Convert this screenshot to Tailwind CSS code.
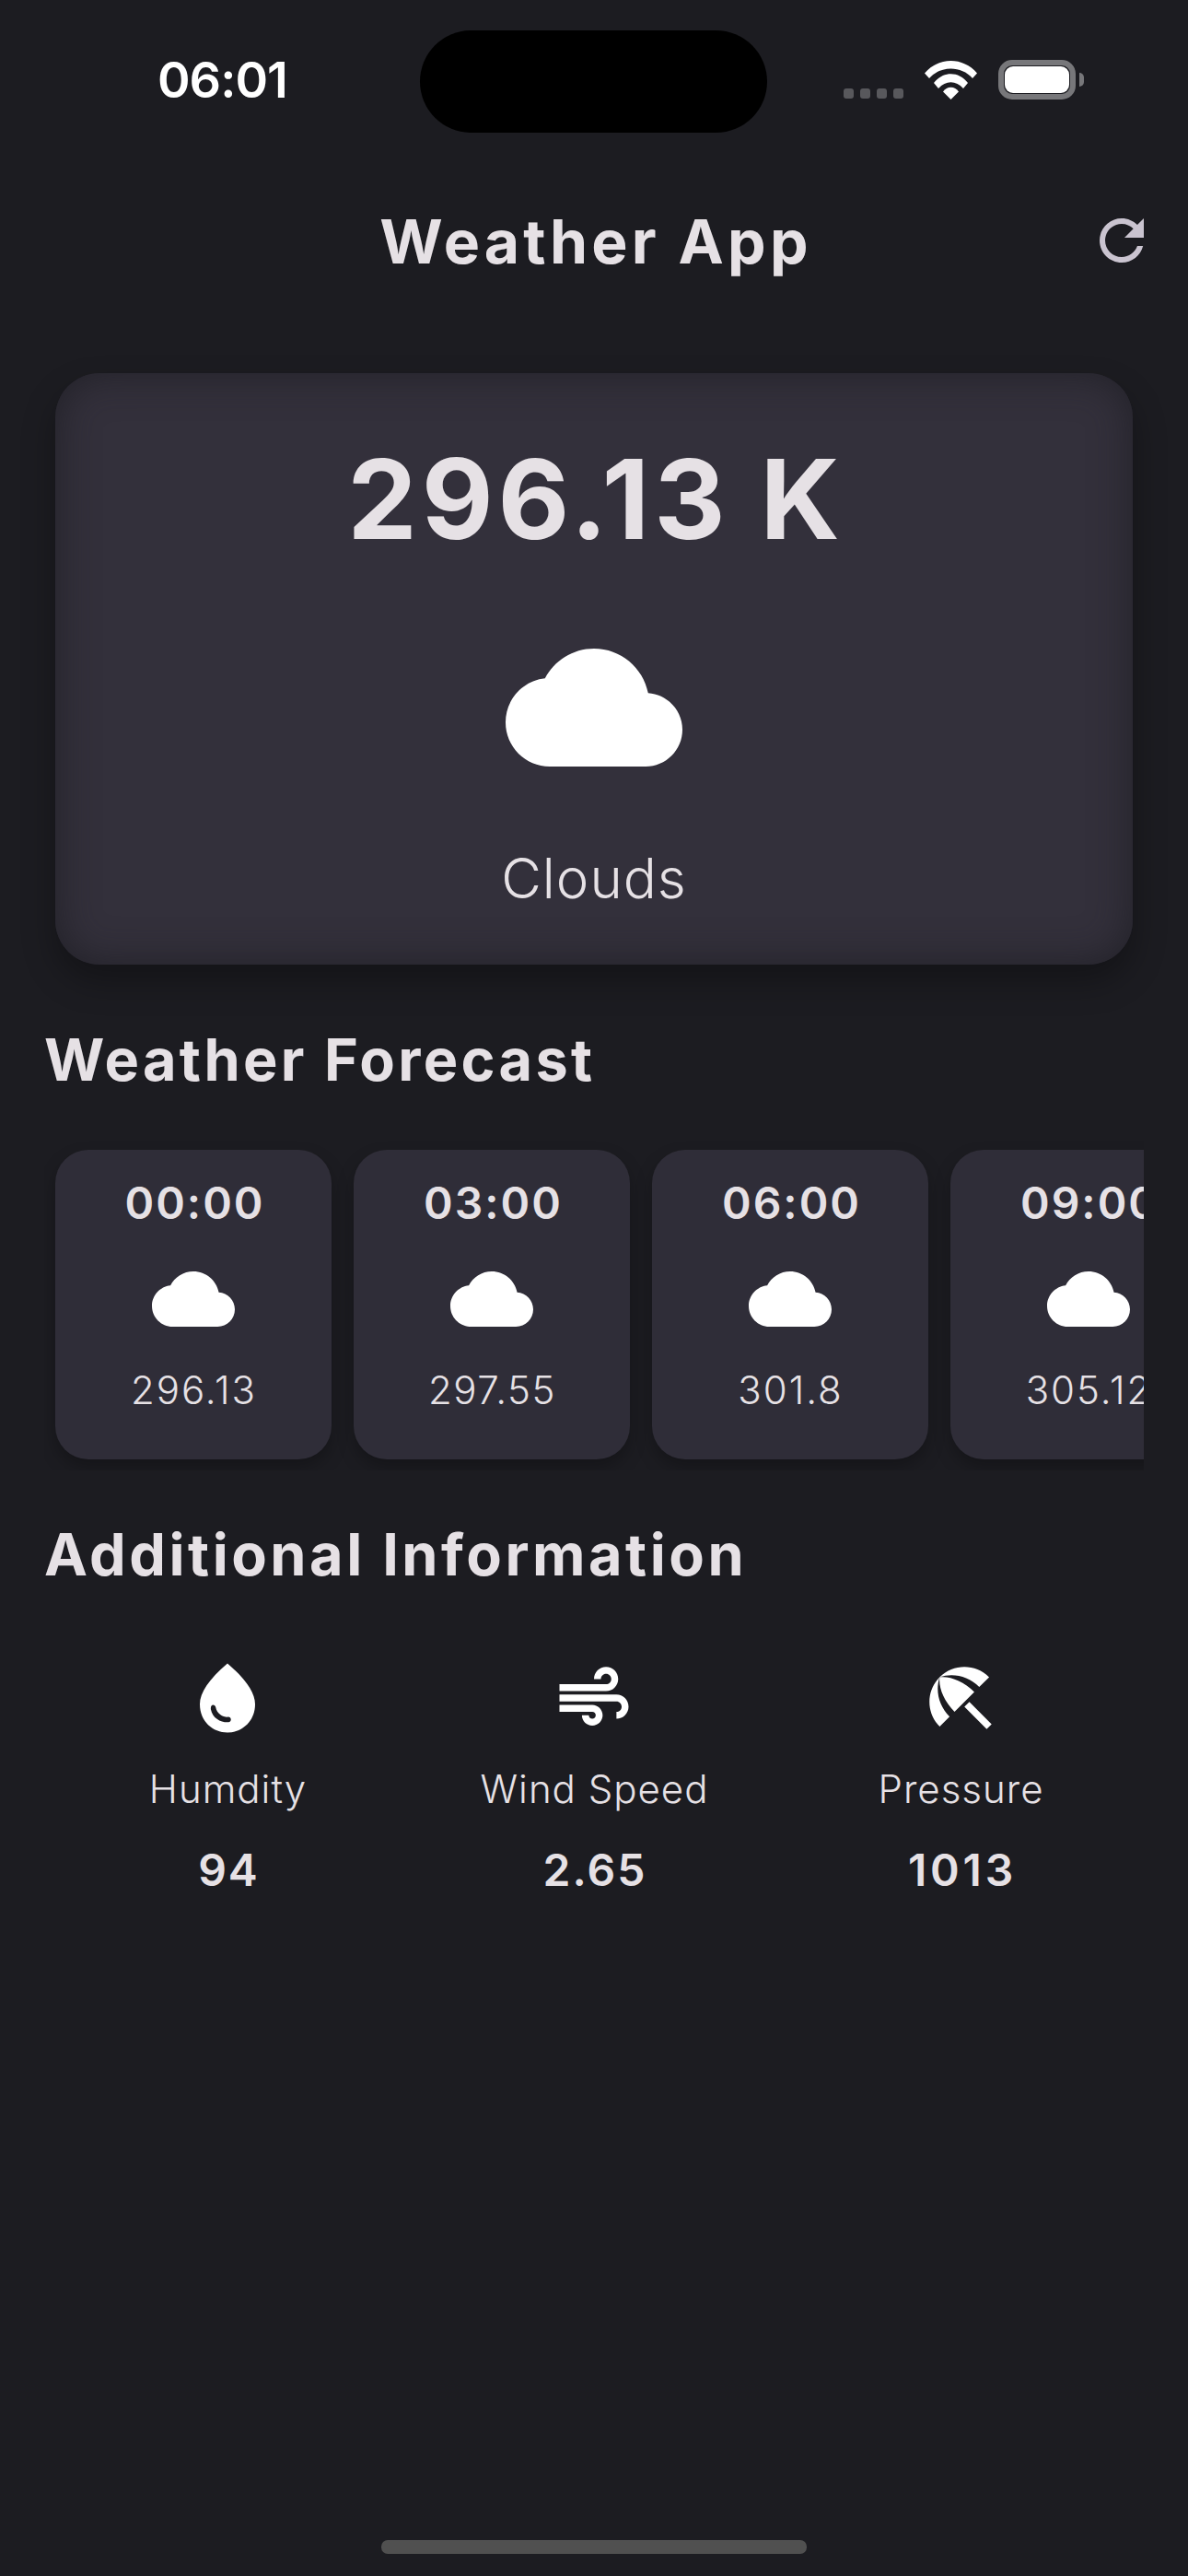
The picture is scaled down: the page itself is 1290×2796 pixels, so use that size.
<!DOCTYPE html>
<html lang="en">

<head>
  <meta charset="UTF-8">
  <meta name="viewport" content="width=device-width, initial-scale=1.0">
  <title>Weather App</title>
  <script src="https://cdn.jsdelivr.net/npm/@tailwindcss/browser@4"></script>
</head>

<body class="bg-[#1c1c21]">
  <div class="relative w-[1290px] h-[2796px] overflow-hidden bg-[#1c1c21] text-[#e6e1e5] font-['Inter',sans-serif]">

    <!-- status bar -->
    <div class="relative flex items-start h-[177px]">
      <span class="ml-[171px] mt-[54px] text-[54px] leading-[66px] font-semibold text-white tracking-[-1px]">06:01</span>
      <div class="absolute left-[456px] top-[33px] w-[377px] h-[111px] rounded-full bg-black"></div>
      <div class="ml-auto mr-[122px] mt-[65px] flex items-end h-[43px]">
        <div class="flex gap-[7px] mr-[23px] mb-[1px]">
          <div class="w-[11px] h-[11px] rounded-[3px] bg-[#58585c]"></div>
          <div class="w-[11px] h-[11px] rounded-[3px] bg-[#58585c]"></div>
          <div class="w-[11px] h-[11px] rounded-[3px] bg-[#58585c]"></div>
          <div class="w-[11px] h-[11px] rounded-[3px] bg-[#58585c]"></div>
        </div>
        <svg class="w-[57px] h-[42px] mr-[23px]" viewBox="0 0 57 42" fill="#fff">
          <path d="M0 13.5C15-4.5 42-4.5 57 13.5L52 19C40 5 17 5 5 19Z" />
          <path d="M10 24C20 11 37 11 47 24L42 30C34 21 23 21 15 30Z" />
          <path d="M20 33.5C24 27 33 27 37 33.5L28.5 42Z" />
        </svg>
        <div class="relative w-[84px] h-[43px] rounded-[15px] border-[6px] border-[#77777a] p-[1px]">
          <div class="w-full h-full rounded-[9px] bg-white"></div>
          <div class="absolute left-[82px] top-[8px] w-[5px] h-[15px] rounded-r-full bg-[#77777a]"></div>
        </div>
      </div>
    </div>

    <!-- app bar -->
    <div class="relative flex items-center justify-center h-[168px]">
      <h1 class="pl-[4px] pt-[2px] text-[66px] font-bold tracking-[4.2px]">Weather App</h1>
      <svg class="absolute left-[1182px] top-[48px] w-[72px] h-[72px]" viewBox="0 0 24 24" fill="#cac4d0">
        <path d="M17.65 6.35C16.2 4.9 14.21 4 12 4c-4.42 0-7.99 3.58-7.99 8s3.57 8 7.99 8c3.73 0 6.84-2.55 7.73-6h-2.08c-.82 2.33-3.04 4-5.65 4-3.31 0-6-2.69-6-6s2.69-6 6-6c1.66 0 3.14.69 4.22 1.78L13 11h7V4l-2.35 2.35z" />
      </svg>
    </div>

    <main class="px-[48px] pt-[48px]">
      <!-- current weather -->
      <div class="mx-[12px] mt-[12px] h-[642px] rounded-[48px] bg-[#33303b] flex flex-col items-center p-[48px] shadow-[inset_0_0_44px_rgba(28,28,33,0.75),0_18px_36px_rgba(0,0,0,0.3)]">
        <div class="h-[171px] pl-[4px] leading-[177px] text-[120px] font-bold tracking-[4.8px]">296.13 K</div>
        <svg class="mt-[48px] w-[192px] h-[192px]" viewBox="0 0 24 24" fill="#fff">
          <path d="M19.35 10.04C18.67 6.59 15.64 4 12 4 9.11 4 6.6 5.64 5.35 8.04 2.34 8.36 0 10.91 0 14c0 3.31 2.69 6 6 6h13c2.76 0 5-2.24 5-5 0-2.64-2.05-4.78-4.65-4.96z" />
        </svg>
        <div class="mt-[46px] h-[87px] leading-[87px] text-[60px] font-light tracking-[1px]">Clouds</div>
      </div>

      <h2 class="mt-[52px] h-[102px] leading-[102px] text-[63px] font-bold tracking-[3.3px]">Weather Forecast</h2>

      <!-- forecast list -->
      <div class="mt-[35px] h-[360px] flex gap-[24px] px-[12px] py-[12px] overflow-hidden">
        <div class="shrink-0 w-[300px] h-[336px] rounded-[36px] bg-[#2f2d38] flex flex-col items-center pt-[24px] shadow-[0_9px_18px_rgba(0,0,0,0.25)]">
          <div class="h-[66px] pl-[3px] leading-[68px] text-[48px] font-semibold tracking-[2px]">00:00</div>
          <svg class="mt-[27px] w-[90px] h-[90px]" viewBox="0 0 24 24" fill="#fff">
            <path d="M19.35 10.04C18.67 6.59 15.64 4 12 4 9.11 4 6.6 5.64 5.35 8.04 2.34 8.36 0 10.91 0 14c0 3.31 2.69 6 6 6h13c2.76 0 5-2.24 5-5 0-2.64-2.05-4.78-4.65-4.96z" />
          </svg>
          <div class="mt-[24px] h-[60px] pl-[1px] leading-[60px] text-[42px] font-light tracking-[2px]">296.13</div>
        </div>
        <div class="shrink-0 w-[300px] h-[336px] rounded-[36px] bg-[#2f2d38] flex flex-col items-center pt-[24px] shadow-[0_9px_18px_rgba(0,0,0,0.25)]">
          <div class="h-[66px] pl-[3px] leading-[68px] text-[48px] font-semibold tracking-[2px]">03:00</div>
          <svg class="mt-[27px] w-[90px] h-[90px]" viewBox="0 0 24 24" fill="#fff">
            <path d="M19.35 10.04C18.67 6.59 15.64 4 12 4 9.11 4 6.6 5.64 5.35 8.04 2.34 8.36 0 10.91 0 14c0 3.31 2.69 6 6 6h13c2.76 0 5-2.24 5-5 0-2.64-2.05-4.78-4.65-4.96z" />
          </svg>
          <div class="mt-[24px] h-[60px] pl-[1px] leading-[60px] text-[42px] font-light tracking-[1.6px]">297.55</div>
        </div>
        <div class="shrink-0 w-[300px] h-[336px] rounded-[36px] bg-[#2f2d38] flex flex-col items-center pt-[24px] shadow-[0_9px_18px_rgba(0,0,0,0.25)]">
          <div class="h-[66px] pl-[3px] leading-[68px] text-[48px] font-semibold tracking-[2px]">06:00</div>
          <svg class="mt-[27px] w-[90px] h-[90px]" viewBox="0 0 24 24" fill="#fff">
            <path d="M19.35 10.04C18.67 6.59 15.64 4 12 4 9.11 4 6.6 5.64 5.35 8.04 2.34 8.36 0 10.91 0 14c0 3.31 2.69 6 6 6h13c2.76 0 5-2.24 5-5 0-2.64-2.05-4.78-4.65-4.96z" />
          </svg>
          <div class="mt-[24px] h-[60px] pl-[1px] leading-[60px] text-[42px] font-light tracking-[2px]">301.8</div>
        </div>
        <div class="shrink-0 w-[300px] h-[336px] rounded-[36px] bg-[#2f2d38] flex flex-col items-center pt-[24px] shadow-[0_9px_18px_rgba(0,0,0,0.25)]">
          <div class="h-[66px] pl-[3px] leading-[68px] text-[48px] font-semibold tracking-[2px]">09:00</div>
          <svg class="mt-[27px] w-[90px] h-[90px]" viewBox="0 0 24 24" fill="#fff">
            <path d="M19.35 10.04C18.67 6.59 15.64 4 12 4 9.11 4 6.6 5.64 5.35 8.04 2.34 8.36 0 10.91 0 14c0 3.31 2.69 6 6 6h13c2.76 0 5-2.24 5-5 0-2.64-2.05-4.78-4.65-4.96z" />
          </svg>
          <div class="mt-[24px] h-[60px] pl-[1px] leading-[60px] text-[42px] font-light tracking-[2px]">305.12</div>
        </div>
      </div>

      <h2 class="mt-[40px] h-[102px] leading-[102px] text-[63px] font-bold tracking-[3.5px]">Additional Information</h2>

      <!-- additional info -->
      <div class="mt-[60px] grid grid-cols-3">
        <div class="flex flex-col items-center">
          <svg class="w-[90px] h-[90px]" viewBox="0 0 24 24" fill="#fff">
            <path d="M12,2c-5.33,4.55-8,8.48-8,11.8c0,4.98,3.8,8.2,8,8.2s8-3.22,8-8.2C20,10.48,17.33,6.55,12,2z M7.83,14c0.37,0,0.67,0.26,0.74,0.62c0.41,2.22,2.28,2.98,3.64,2.87c0.43-0.02,0.79,0.32,0.79,0.75c0,0.4-0.32,0.73-0.72,0.75c-2.13,0.13-4.62-1.09-5.1-3.75C7.1,14.37,7.42,14,7.83,14z" fill-rule="evenodd" />
          </svg>
          <div class="mt-[24px] h-[60px] pl-[1px] leading-[60px] text-[42px] font-light tracking-[1px]">Humdity</div>
          <div class="mt-[25px] h-[66px] pl-[3px] leading-[66px] text-[48px] font-semibold tracking-[2px]">94</div>
        </div>
        <div class="flex flex-col items-center">
          <svg class="w-[90px] h-[90px]" viewBox="0 0 24 24" fill="#fff">
            <path d="M14.5,17c0,1.65-1.35,3-3,3s-3-1.35-3-3h2c0,0.55,0.45,1,1,1s1-0.45,1-1s-0.45-1-1-1H2v-2h9.5C13.15,14,14.5,15.35,14.5,17z M19,6.5C19,4.57,17.43,3,15.5,3S12,4.57,12,6.5h2C14,5.67,14.67,5,15.5,5S17,5.67,17,6.5S16.33,8,15.5,8H2v2h13.5C17.43,10,19,8.43,19,6.5z M18.5,11H2v2h16.5c0.83,0,1.5,0.67,1.5,1.5S19.33,16,18.5,16v2c1.93,0,3.5-1.57,3.5-3.5S20.43,11,18.5,11z" />
          </svg>
          <div class="mt-[24px] h-[60px] pl-[1px] leading-[60px] text-[42px] font-light tracking-[1px]">Wind Speed</div>
          <div class="mt-[25px] h-[66px] pl-[2px] leading-[66px] text-[48px] font-semibold tracking-[2px]">2.65</div>
        </div>
        <div class="flex flex-col items-center">
          <svg class="w-[90px] h-[90px]" viewBox="0 0 24 24" fill="#fff">
            <path d="M13.127 14.56l1.43-1.43 6.44 6.443L19.57 21zm4.293-5.73l2.86-2.86c-3.95-3.95-10.35-3.96-14.3-.02 3.93-1.3 8.31-.25 11.44 2.88zM5.95 5.98c-3.94 3.95-3.93 10.35.02 14.3l2.86-2.86C5.7 14.29 4.65 9.91 5.95 5.98zm.02-.02l-.01.01c-.38 3.01 1.17 6.88 4.3 10.02l5.73-5.73c-3.13-3.13-7.01-4.68-10.02-4.3z" />
          </svg>
          <div class="mt-[24px] h-[60px] pl-[1px] leading-[60px] text-[42px] font-light tracking-[1px]">Pressure</div>
          <div class="mt-[25px] h-[66px] pl-[4px] leading-[66px] text-[48px] font-semibold tracking-[3.8px]">1013</div>
        </div>
      </div>
    </main>

    <!-- home indicator -->
    <div class="absolute left-[414px] top-[2757px] w-[462px] h-[15px] rounded-[7px] bg-[#505050]"></div>
  </div>
</body>

</html>
